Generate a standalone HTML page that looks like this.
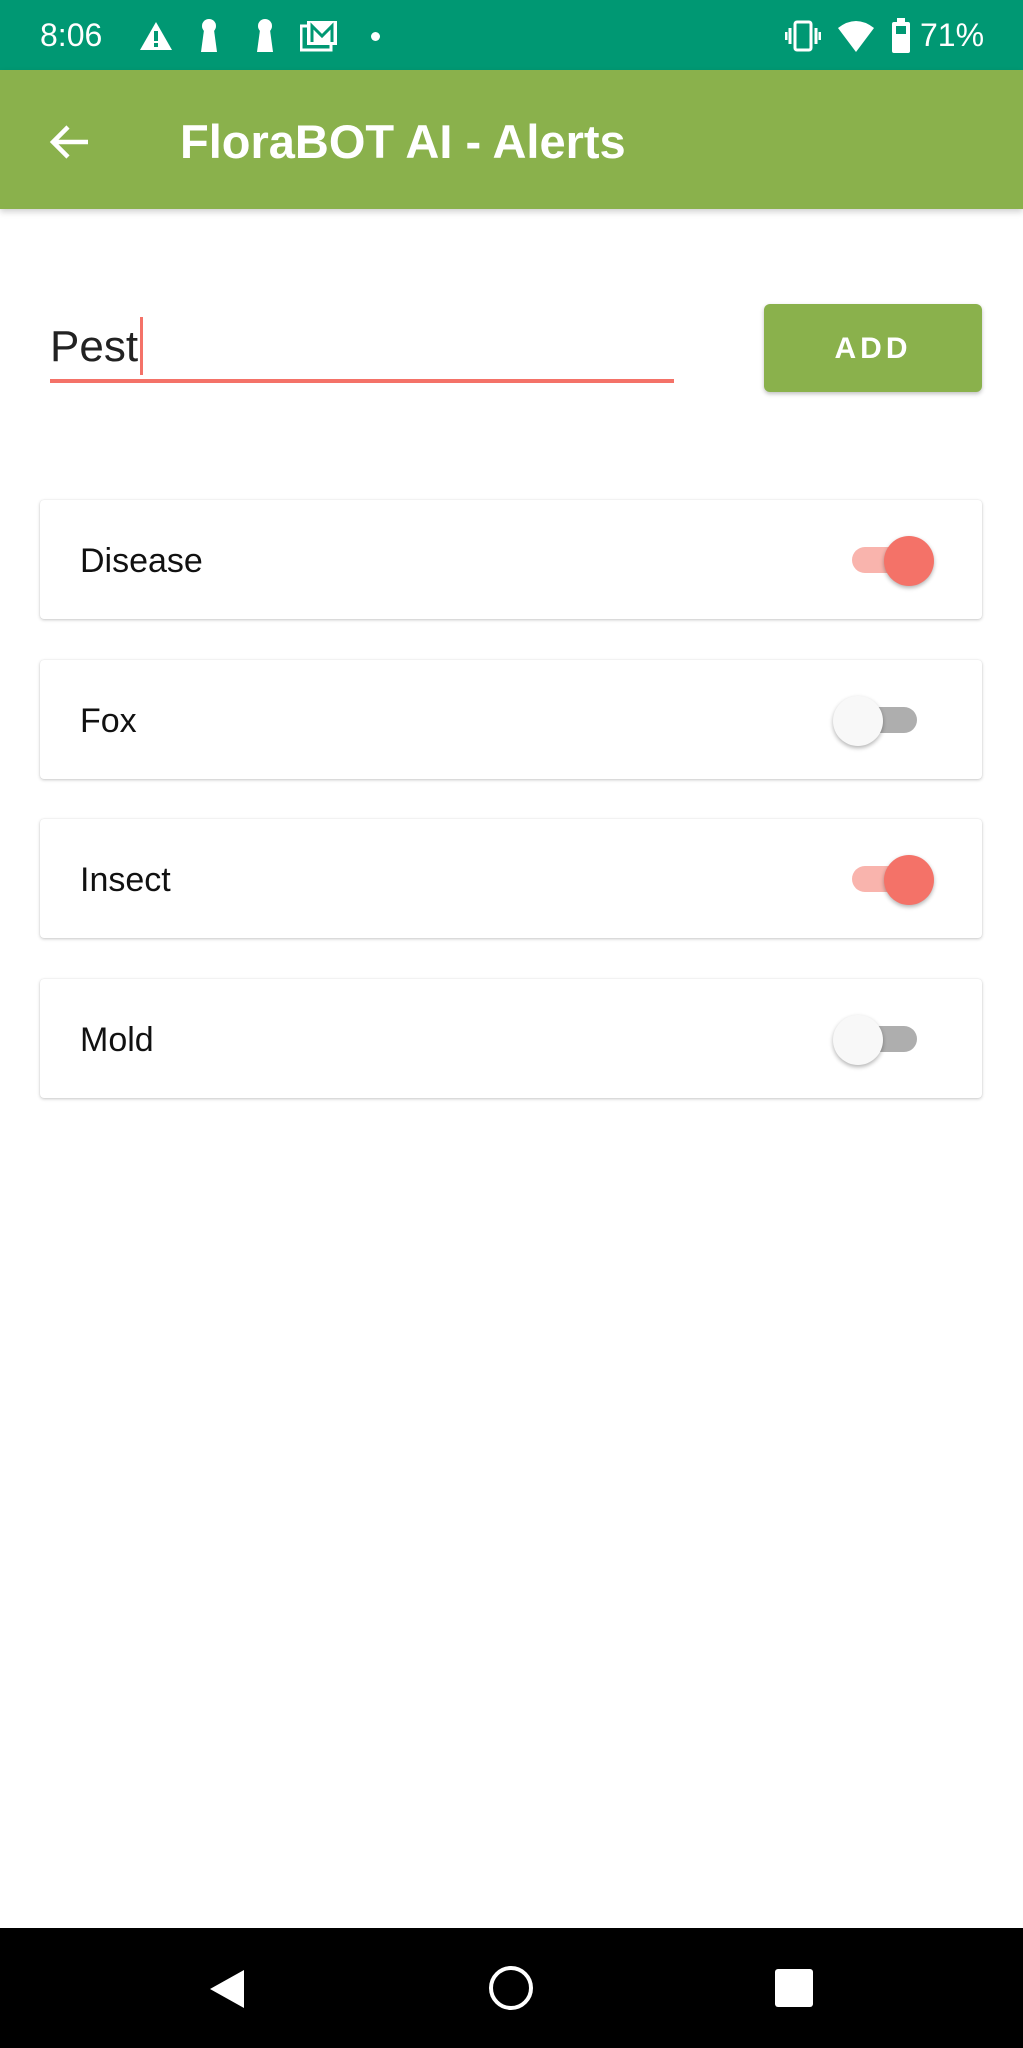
<!DOCTYPE html>
<html><head><meta charset="utf-8"><style>
*{margin:0;padding:0;box-sizing:border-box}
body{width:1023px;height:2048px;background:#fff;position:relative;overflow:hidden;font-family:"Liberation Sans",sans-serif}
.abs{position:absolute}
.sb{left:0;top:0;width:1023px;height:70px;background:#009873;color:#fff}
.ab{left:0;top:70px;width:1023px;height:139px;background:#8ab14c;box-shadow:0 3px 6px rgba(0,0,0,.18)}
.card{position:absolute;left:40px;width:942px;height:119px;background:#fff;border-radius:4px;box-shadow:0 1px 3px rgba(0,0,0,.22),0 0 1px rgba(0,0,0,.1)}
.card span{position:absolute;left:40px;top:42px;font-size:34px;color:#111}
.tr{position:absolute;height:26px;border-radius:13px}
.th{position:absolute;width:50px;height:50px;border-radius:50%;box-shadow:0 2px 4px rgba(0,0,0,.3)}
</style></head><body>
<div class="abs sb">
 <div class="abs" style="left:40px;top:17px;font-size:32px">8:06</div>
 <svg class="abs" style="left:138px;top:20px" width="36" height="32" viewBox="0 0 36 32"><path d="M18 2L34 30H2Z" fill="#fff"/><rect x="16" y="11" width="4" height="10" fill="#009873"/><rect x="16" y="23" width="4" height="4" fill="#009873"/></svg>
 <svg class="abs" style="left:198px;top:18px" width="22" height="36"><circle cx="11" cy="8" r="7" fill="#fff"/><path d="M6 12h10l3 22H3Z" fill="#fff"/></svg>
 <svg class="abs" style="left:254px;top:18px" width="22" height="36"><circle cx="11" cy="8" r="7" fill="#fff"/><path d="M6 12h10l3 22H3Z" fill="#fff"/></svg>
 <svg class="abs" style="left:300px;top:20px" width="40" height="32"><rect x="1" y="6" width="30" height="24" fill="none" stroke="#fff" stroke-width="3"/><rect x="7" y="1" width="30" height="24" fill="#fff"/><path d="M12 22V6l10 10 10-10v16" stroke="#009873" stroke-width="3" fill="none"/></svg>
 <div class="abs" style="left:371px;top:32px;width:9px;height:9px;border-radius:50%;background:#fff"></div>
 <svg class="abs" style="left:785px;top:20px" width="36" height="32"><rect x="10" y="2" width="16" height="28" rx="2" fill="none" stroke="#fff" stroke-width="3"/><path d="M5 8v16M1 12v8M31 8v16M35 12v8" stroke="#fff" stroke-width="3"/></svg>
 <svg class="abs" style="left:838px;top:20px" width="36" height="32"><path d="M0 8Q18-6 36 8L18 32Z" fill="#fff"/></svg>
 <svg class="abs" style="left:891px;top:18px" width="20" height="36"><rect x="6" y="0" width="8" height="4" fill="#fff"/><rect x="1" y="4" width="18" height="31" rx="2" fill="#fff"/><rect x="5" y="8" width="10" height="8" fill="#009873"/></svg>
 <div class="abs" style="left:920px;top:17px;font-size:32px">71%</div>
</div>
<div class="abs ab">
 <svg class="abs" style="left:48px;top:52px" width="42" height="40" viewBox="0 0 42 40"><path d="M40 20H6M20 5L5 20l15 15" stroke="#fff" stroke-width="4.5" fill="none"/></svg>
 <div class="abs" style="left:180px;top:44px;font-size:47px;font-weight:bold;color:#fff">FloraBOT AI - Alerts</div>
</div>
<div class="abs" style="left:50px;top:322px;font-size:44px;color:#222">Pest</div>
<div class="abs" style="left:140px;top:317px;width:3px;height:58px;background:#f47268"></div>
<div class="abs" style="left:50px;top:379px;width:624px;height:4px;background:#f47268"></div>
<div class="abs" style="left:764px;top:304px;width:218px;height:88px;background:#8ab14c;border-radius:6px;box-shadow:0 2px 4px rgba(0,0,0,.25);color:#fff;font-size:30px;font-weight:bold;letter-spacing:4px;text-align:center;line-height:90px">ADD</div>

<div class="card" style="top:500px"><span>Disease</span><div class="tr" style="left:812px;top:47px;width:62px;background:#f9b4ad"></div><div class="th" style="left:844px;top:36px;background:#f47268"></div></div>
<div class="card" style="top:660px"><span>Fox</span><div class="tr" style="left:817px;top:47px;width:60px;background:#aeaeae"></div><div class="th" style="left:793px;top:36px;background:#f8f8f8"></div></div>
<div class="card" style="top:819px"><span>Insect</span><div class="tr" style="left:812px;top:47px;width:62px;background:#f9b4ad"></div><div class="th" style="left:844px;top:36px;background:#f47268"></div></div>
<div class="card" style="top:979px"><span>Mold</span><div class="tr" style="left:817px;top:47px;width:60px;background:#aeaeae"></div><div class="th" style="left:793px;top:36px;background:#f8f8f8"></div></div>

<div class="abs" style="left:0;top:1928px;width:1023px;height:120px;background:#000">
 <svg class="abs" style="left:206px;top:40px" width="40" height="42"><path d="M38 2V40L4 21Z" fill="#fff"/></svg>
 <div class="abs" style="left:489px;top:38px;width:44px;height:44px;border-radius:50%;border:4px solid #fff"></div>
 <div class="abs" style="left:775px;top:41px;width:38px;height:38px;border-radius:3px;background:#fff"></div>
</div>
</body></html>
